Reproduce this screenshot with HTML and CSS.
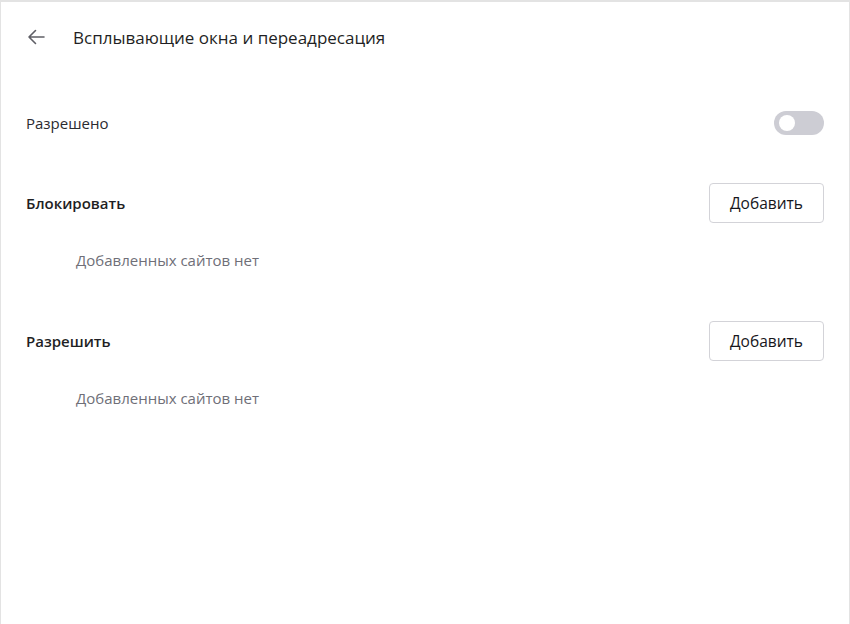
FILE: index.html
```html
<!DOCTYPE html>
<html lang="ru">
<head>
    <meta charset="UTF-8">
    <meta name="viewport" content="width=device-width, initial-scale=1.0">
    <title>Всплывающие окна и переадресация</title>
    <link rel="stylesheet" href="styles.css">
</head>
<body>

    <div class="page">
        <div class="header">
            <button class="back" aria-label="Назад">
                <svg width="20" height="20" viewBox="0 0 20 20">
                    <path d="M18 10H3M9.5 3.5L3 10l6.5 6.5" fill="none" stroke="#5f5f66" stroke-width="1.6" stroke-linecap="round" stroke-linejoin="round"/>
                </svg>
            </button>
            <h1 class="title">Всплывающие окна и переадресация</h1>
        </div>

        <div class="row toggle-row">
            <span class="label">Разрешено</span>
            <span class="switch"><span class="knob"></span></span>
        </div>

        <div class="section">
            <div class="row">
                <span class="label strong">Блокировать</span>
                <button class="add">Добавить</button>
            </div>
            <div class="empty">Добавленных сайтов нет</div>
        </div>

        <div class="section">
            <div class="row">
                <span class="label strong">Разрешить</span>
                <button class="add">Добавить</button>
            </div>
            <div class="empty">Добавленных сайтов нет</div>
        </div>
    </div>

</body>
</html>
```

FILE: styles.css
```css
html, body {
    height: 100%;
}
body {
    margin: 0;
    padding: 2px 1px 0 1px;
    box-sizing: border-box;
    background: #e3e3e3;
    font-family: "Open Sans", "Noto Sans", sans-serif;
    color: #1f1f24;
}
.page {
    height: 100%;
    background: #fff;
    padding: 0 25px 0 24px;
    box-sizing: border-box;
}
.header {
    display: flex;
    align-items: center;
    height: 40px;
    padding-top: 15px;
}
.back {
    width: 22px;
    height: 22px;
    padding: 0;
    border: none;
    background: none;
    display: flex;
    align-items: center;
    justify-content: center;
    cursor: pointer;
}
.title {
    margin: 0 0 0 26px;
    font-size: 17px;
    font-weight: 500;
    color: #1f1f24;
}
.row {
    display: flex;
    align-items: center;
    justify-content: space-between;
    height: 40px;
}
.toggle-row {
    margin-top: 46px;
    padding-left: 1px;
}
.section {
    margin-top: 40px;
    padding-left: 1px;
}
.section + .section {
    margin-top: 50px;
}
.label {
    font-size: 15px;
    color: #2b2b30;
}
.strong {
    font-weight: 600;
    color: #1f1f24;
}
.switch {
    width: 50px;
    height: 24px;
    border-radius: 12px;
    background: #cdcdd4;
    display: flex;
    align-items: center;
    padding-left: 5px;
    box-sizing: border-box;
}
.knob {
    width: 16px;
    height: 16px;
    border-radius: 50%;
    background: #fff;
}
.add {
    width: 115px;
    height: 40px;
    font-family: inherit;
    font-size: 15.5px;
    font-weight: 500;
    color: #17171c;
    background: #fff;
    border: 1px solid #d3d3d8;
    border-radius: 4px;
    cursor: pointer;
}
.empty {
    margin: 26px 0 0 50px;
    font-size: 15px;
    line-height: 22px;
    color: #6f6f78;
}
```
